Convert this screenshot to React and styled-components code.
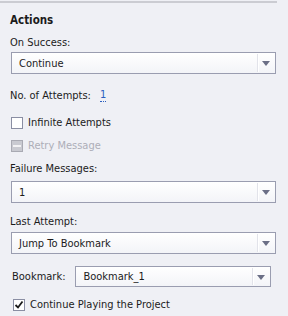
import React from 'react'
import styled, { createGlobalStyle } from 'styled-components'

const Global = createGlobalStyle`
  html, body {
    margin: 0;
    background: #eff0f5;
  }
  body {
    font-family: "DejaVu Sans Condensed", "DejaVu Sans", Tahoma, sans-serif;
    font-size: 11px;
    color: #1b1b1b;
  }
`

const Panel = styled.div`
  width: 288px;
  height: 316px;
  box-sizing: border-box;
  padding-top: 1px;
  display: flex;
  flex-direction: column;
`

const Rule = styled.div`
  width: 277px;
  height: 2px;
  background: #cbccd2;
`

const Body = styled.div`
  display: flex;
  flex-direction: column;
  padding: 0 12px 0 11px;
`

const Heading = styled.div`
  font-weight: bold;
  font-size: 11.5px;
  margin: 10px 0 0 -1px;
  line-height: 14px;
`

const Label = styled.div`
  line-height: 13px;
  margin-top: ${p => p.$top || 0}px;
  margin-left: -1px;
`

const Row = styled.div`
  display: flex;
  align-items: center;
  margin-top: ${p => p.$top || 0}px;
  gap: ${p => p.$gap || 0}px;
`

const Select = styled.div`
  position: relative;
  box-sizing: border-box;
  height: ${p => p.$height || 22}px;
  width: ${p => p.$width || 265}px;
  margin-top: ${p => p.$top || 0}px;
  border: 1px solid #9a9db0;
  background: linear-gradient(#ffffff, #f3f4f8);
  display: flex;
  align-items: center;
  padding-left: 7px;
  color: #1b1b1b;
`

const Sep = styled.span`
  position: absolute;
  right: 17px;
  top: 1px;
  bottom: 1px;
  width: 1px;
  background: #e2e3ea;
  box-shadow: 1px 0 0 #ffffff;
`

const Arrow = styled.span`
  position: absolute;
  right: 5px;
  top: calc(50% - 2px);
  width: 0;
  height: 0;
  border-left: 4px solid transparent;
  border-right: 4px solid transparent;
  border-top: 5px solid #6b6f86;
`

const Link = styled.span`
  color: #2a5fc0;
  border-bottom: 1px dotted #2a5fc0;
  line-height: 12px;
`

const Box = styled.span`
  box-sizing: border-box;
  width: 12px;
  height: 12px;
  border: 1px solid ${p => (p.$disabled ? '#a9aab3' : '#8a8ea3')};
  background: ${p => (p.$disabled ? '#c9cad1' : '#ffffff')};
  display: flex;
  align-items: center;
  justify-content: center;
`

const Dash = styled.span`
  width: 8px;
  height: 2px;
  background: #f2f2f4;
`

const CheckText = styled.span`
  color: ${p => (p.$disabled ? '#adaeb8' : '#1b1b1b')};
`

function Dropdown({ value, width, height, top }) {
  return (
    <Select $width={width} $height={height} $top={top}>
      {value}
      <Sep />
      <Arrow />
    </Select>
  )
}

export default function App() {
  return (
    <Panel>
      <Global />
      <Rule />
      <Body>
        <Heading>Actions</Heading>
        <Label $top={9}>On Success:</Label>
        <Dropdown value="Continue" top={3} />
        <Row $top={15} $gap={9}>
          <Label>No. of Attempts:</Label>
          <Link>1</Link>
        </Row>
        <Row $top={14} $gap={5}>
          <Box />
          <CheckText>Infinite Attempts</CheckText>
        </Row>
        <Row $top={10} $gap={5}>
          <Box $disabled>
            <Dash />
          </Box>
          <CheckText $disabled>Retry Message</CheckText>
        </Row>
        <Label $top={10}>Failure Messages:</Label>
        <Dropdown value="1" top={6} />
        <Label $top={12}>Last Attempt:</Label>
        <Dropdown value="Jump To Bookmark" top={4} />
        <Row $top={12} $gap={10}>
          <Label style={{ marginLeft: 1 }}>Bookmark:</Label>
          <Dropdown value="Bookmark_1" width={196} height={21} />
        </Row>
        <Row $top={11} $gap={5} style={{ marginLeft: 2 }}>
          <Box>
            <svg width="10" height="10" viewBox="0 0 10 10">
              <path d="M1.5 5 L4 7.5 L8.5 1.5" fill="none" stroke="#1b1b1b" strokeWidth="1.8" />
            </svg>
          </Box>
          <CheckText>Continue Playing the Project</CheckText>
        </Row>
      </Body>
    </Panel>
  )
}
